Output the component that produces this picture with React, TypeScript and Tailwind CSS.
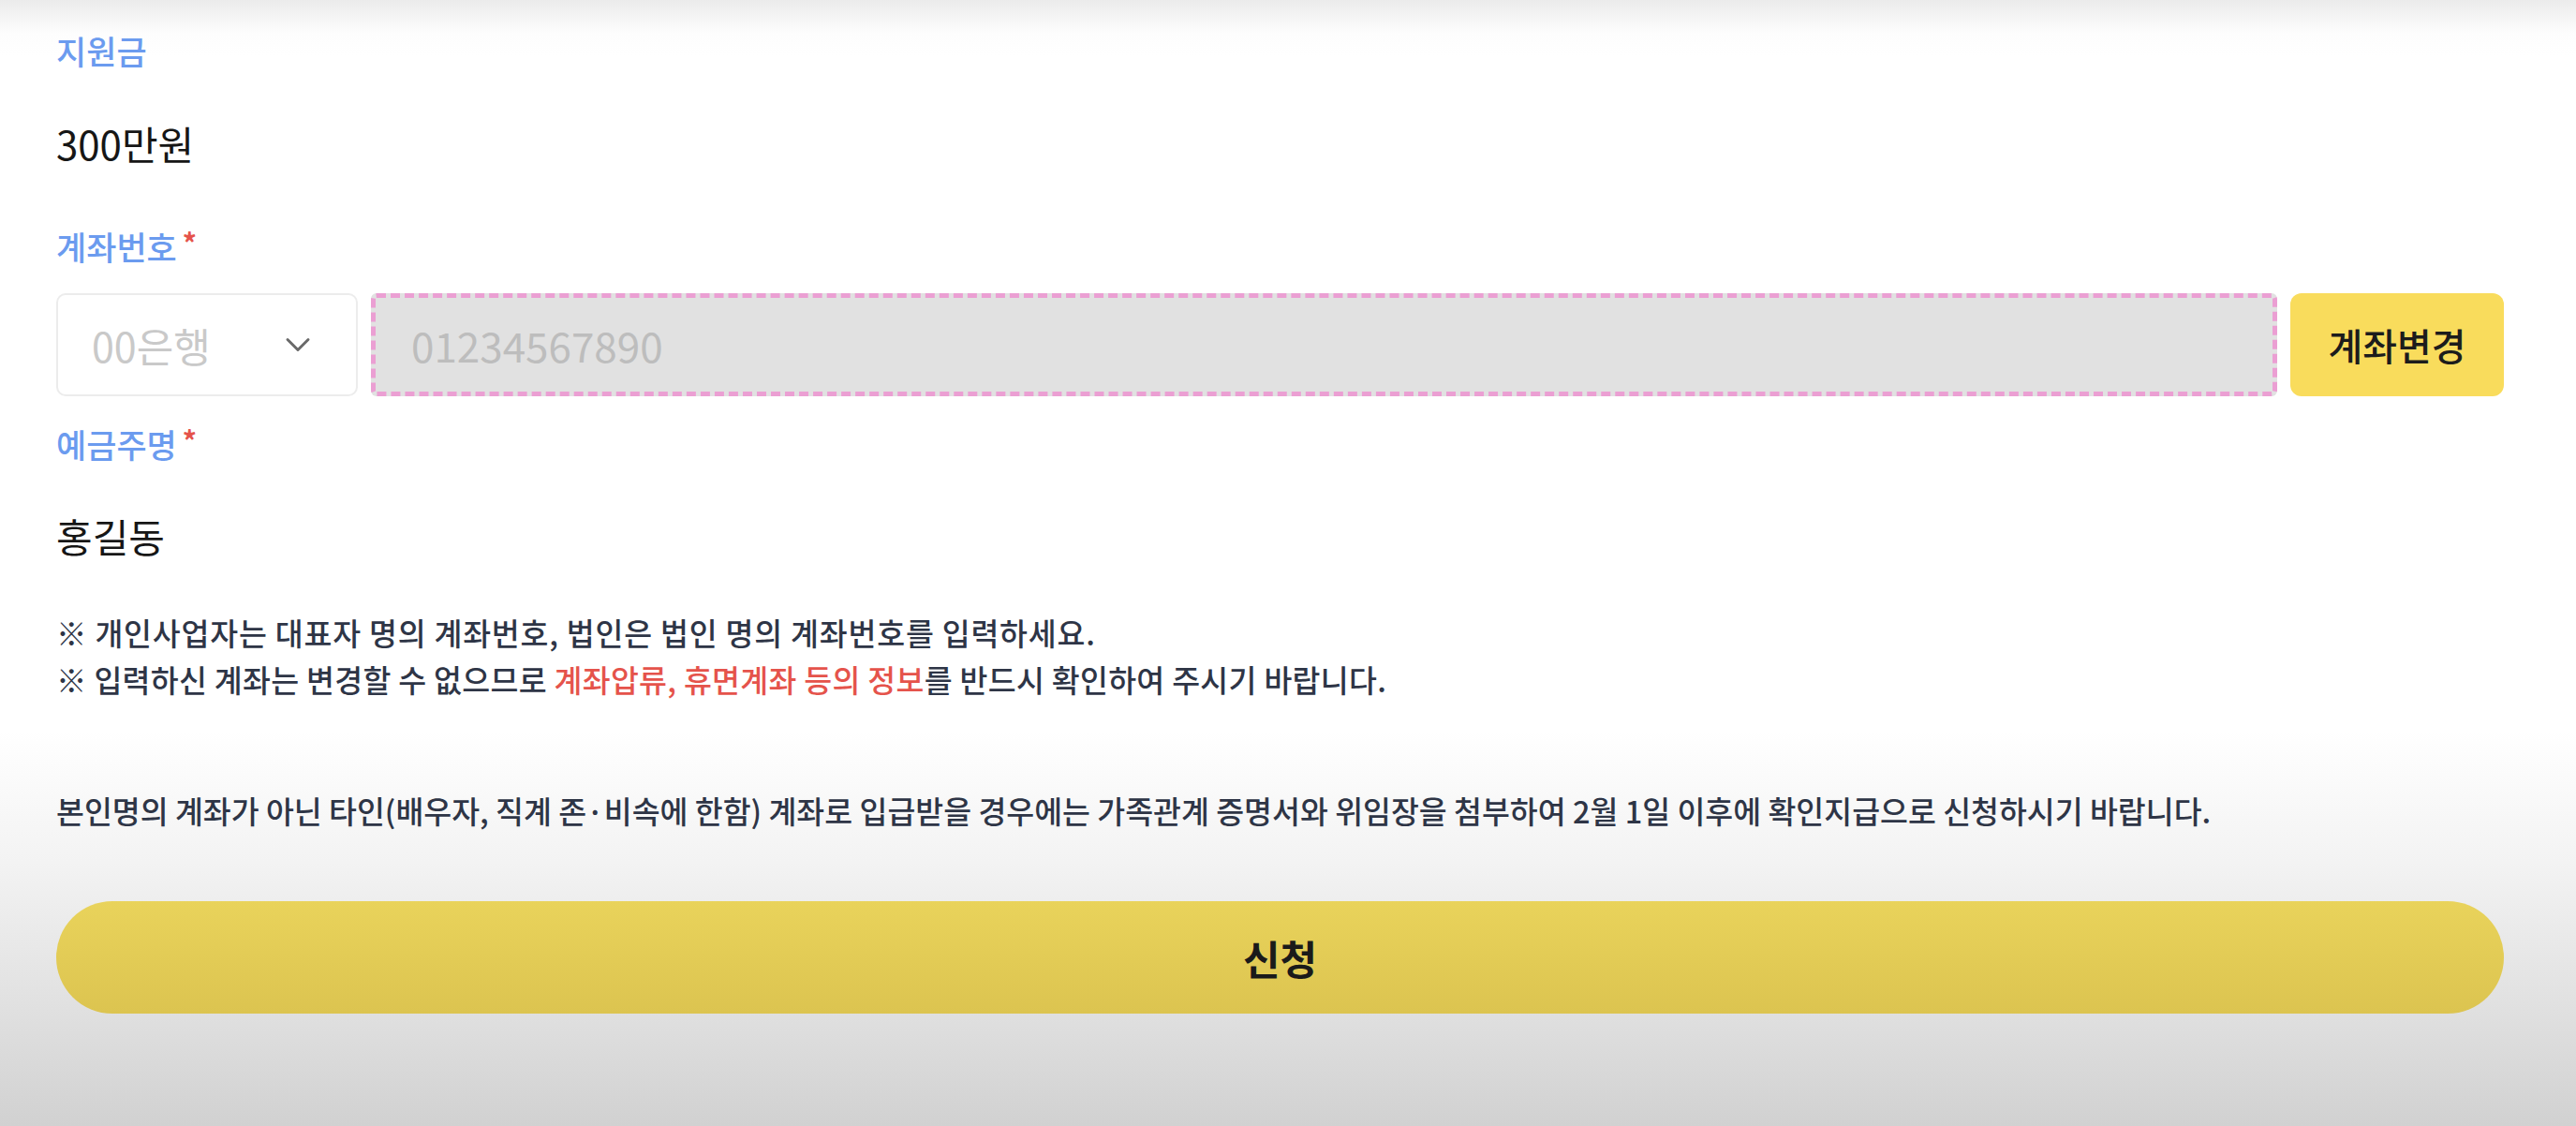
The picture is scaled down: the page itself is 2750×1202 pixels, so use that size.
import { ChevronDown } from "lucide-react"

const font = "font-['Noto_Sans_CJK_KR','Noto_Sans',sans-serif]"

function Label({ text, required = false }: { text: string; required?: boolean }) {
  return (
    <div className="flex items-start text-[35px] leading-[48px] font-medium text-[#6b9bef]">
      <span>{text}</span>
      {required && <span className="ml-[6px] text-[30px] leading-[38px] font-bold text-[#e5534b]">*</span>}
    </div>
  )
}

export default function App() {
  return (
    <div
      className={`${font} w-full h-[1202px] overflow-hidden bg-[linear-gradient(to_bottom,#ebebeb_0px,#fdfdfd_36px,#ffffff_60px,#ffffff_780px,#f3f3f3_920px,#d1d1d1_1202px)]`}
    >
      <div className="pl-[60px] pr-[77px] pt-[30px] flex flex-col">
        <Label text="지원금" />

        <div className="mt-[51px] text-[42px] leading-[48px] text-[#161616]">300만원</div>

        <div className="mt-[62px]">
          <Label text="계좌번호" required />
        </div>

        {/* 계좌 입력 */}
        <div className="mt-[26px] flex items-stretch gap-[14px] h-[110px]">
          <div className="w-[322px] flex items-center justify-between pl-[36px] pr-[40px] bg-white border-2 border-[#ececec] rounded-[10px]">
            <span className="text-[43px] text-[#c9c9c9]">00은행</span>
            <ChevronDown size={44} strokeWidth={1.6} className="text-[#6a6a6a]" />
          </div>
          <div className="flex-1 flex items-center pl-[38px] bg-[#e1e1e1] border-[5px] border-dashed border-[#eb9fd3] rounded-[6px]">
            <span className="text-[44px] text-[#bdbdbd]">01234567890</span>
          </div>
          <button className="w-[228px] flex items-center justify-center bg-[#f9dc5c] rounded-[12px] text-[40px] font-medium text-[#1c1c1c]">
            계좌변경
          </button>
        </div>

        <div className="mt-[27px]">
          <Label text="예금주명" required />
        </div>

        <div className="mt-[50px] text-[42px] leading-[48px] text-[#161616]">홍길동</div>

        {/* 안내 */}
        <div className="mt-[54px] text-[32.5px] leading-[50px] font-medium text-[#2e3546]">
          <p className="tracking-[0.8px]">※ 개인사업자는 대표자 명의 계좌번호, 법인은 법인 명의 계좌번호를 입력하세요.</p>
          <p className="tracking-[0.3px]">
            ※ 입력하신 계좌는 변경할 수 없으므로{" "}
            <span className="text-[#e5534b]">계좌압류, 휴면계좌 등의 정보</span>를 반드시 확인하여 주시기 바랍니다.
          </p>
        </div>

        <p className="mt-[90px] text-[32.5px] leading-[50px] font-medium text-[#2e3546]">
          본인명의 계좌가 아닌 타인(배우자, 직계 존·비속에 한함) 계좌로 입급받을 경우에는 가족관계 증명서와 위임장을 첨부하여 2월 1일 이후에 확인지급으로 신청하시기 바랍니다.
        </p>

        <button className="mt-[72px] h-[120px] w-full rounded-full bg-gradient-to-b from-[#e9d35b] to-[#dcc450] text-[43px] font-bold text-[#1a1a1a]">
          신청
        </button>
      </div>
    </div>
  )
}
